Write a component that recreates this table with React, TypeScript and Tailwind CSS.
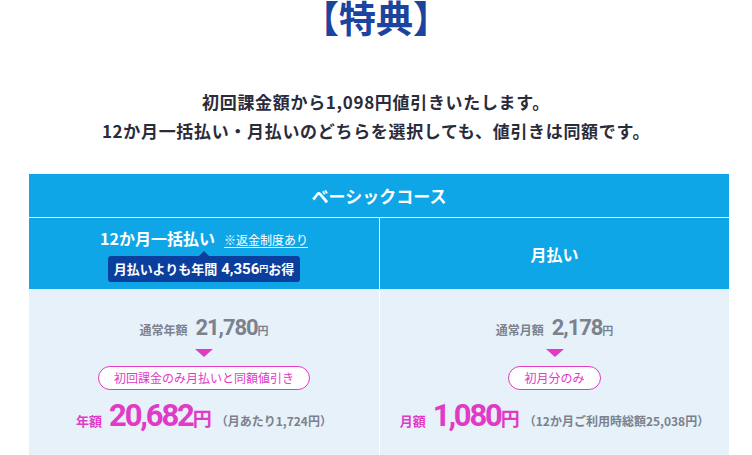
const jp = "font-['Noto_Sans_CJK_JP','Noto_Sans',sans-serif]";
const num = "font-['Roboto','Noto_Sans_CJK_JP',sans-serif]";

const Arrow = () => (
  <div className="w-0 h-0 border-l-[9px] border-r-[9px] border-t-[8px] border-l-transparent border-r-transparent border-t-[#e03ac6]" />
);

const PriceBlock = ({
  normalLabel,
  normalPrice,
  pill,
  label,
  price,
  note,
}: {
  normalLabel: string;
  normalPrice: string;
  pill: string;
  label: string;
  price: string;
  note: string;
}) => (
  <div className="bg-[#e6f1fa] h-[170px] flex flex-col items-center pt-[22px]">
    <div className="flex items-baseline text-[#7b818d] font-bold">
      <span className="text-[12px]">{normalLabel}</span>
      <span className={`${num} text-[22px] ml-[8px] tracking-[-0.05em]`}>{normalPrice}</span>
      <span className="text-[11px]">円</span>
    </div>
    <div className="mt-[5px]">
      <Arrow />
    </div>
    <div className="mt-[9px] h-[24px] px-[15px] flex items-center rounded-full border border-[#e03ac6] bg-white text-[#e03ac6] text-[12px] leading-none">
      {pill}
    </div>
    <div className="mt-[6px] flex items-baseline font-bold">
      <span className="text-[13px] text-[#e03ac6]">{label}</span>
      <span className={`${num} text-[31px] text-[#e03ac6] ml-[7px] tracking-[-0.07em] leading-[40px]`}>{price}</span>
      <span className="text-[19px] text-[#e03ac6]">円</span>
      <span className="text-[12px] text-[#7b818d] ml-[4px]">{note}</span>
    </div>
  </div>
);

export default function App() {
  return (
    <div className={`${jp} w-[752px] h-[455px] overflow-hidden bg-white`}>
      <h1 className="text-center text-[37px] font-bold leading-none text-[#1b449e] mt-[-1px]">【特典】</h1>

      <div className="mt-[51px] text-center text-[17px] font-bold text-[#2b2c3b] leading-[29px] tracking-[0.04em]">
        <p>初回課金額から1,098円値引きいたします。</p>
        <p>12か月一括払い・月払いのどちらを選択しても、値引きは同額です。</p>
      </div>

      <div className="ml-[29px] w-[700px] mt-[29px] bg-white">
        <div className="h-[43px] bg-[#0ea6e6] flex items-center justify-center text-white text-[17px] font-bold">
          ベーシックコース
        </div>
        <div className="mt-px grid grid-cols-[350px_349px] gap-x-px">
          <div className="h-[71px] bg-[#0ea6e6] flex flex-col items-center pt-[8px]">
            <div className="flex items-baseline text-white">
              <span className="text-[16px] font-bold">12か月一括払い</span>
              <span className="ml-[9px] text-[12px] underline underline-offset-2">※返金制度あり</span>
            </div>
            <div className="relative mt-[6px] h-[26px] w-[192px] rounded-[3px] bg-[#0b3f9e] flex items-center justify-center text-white text-[13px] font-bold">
              <span className="absolute -top-[5px] left-[91px] w-0 h-0 border-l-[5px] border-r-[5px] border-b-[5px] border-l-transparent border-r-transparent border-b-[#0b3f9e]" />
              <span>月払いよりも年間</span>
              <span className={`${num} ml-[4px] text-[15px]`}>4,356</span>
              <span className="text-[9px]">円</span>
              <span>お得</span>
            </div>
          </div>
          <div className="h-[71px] bg-[#0ea6e6] flex items-center justify-center text-white text-[16px] font-bold">
            月払い
          </div>
          <PriceBlock
            normalLabel="通常年額"
            normalPrice="21,780"
            pill="初回課金のみ月払いと同額値引き"
            label="年額"
            price="20,682"
            note="（月あたり1,724円）"
          />
          <PriceBlock
            normalLabel="通常月額"
            normalPrice="2,178"
            pill="初月分のみ"
            label="月額"
            price="1,080"
            note="（12か月ご利用時総額25,038円）"
          />
        </div>
      </div>
    </div>
  );
}
